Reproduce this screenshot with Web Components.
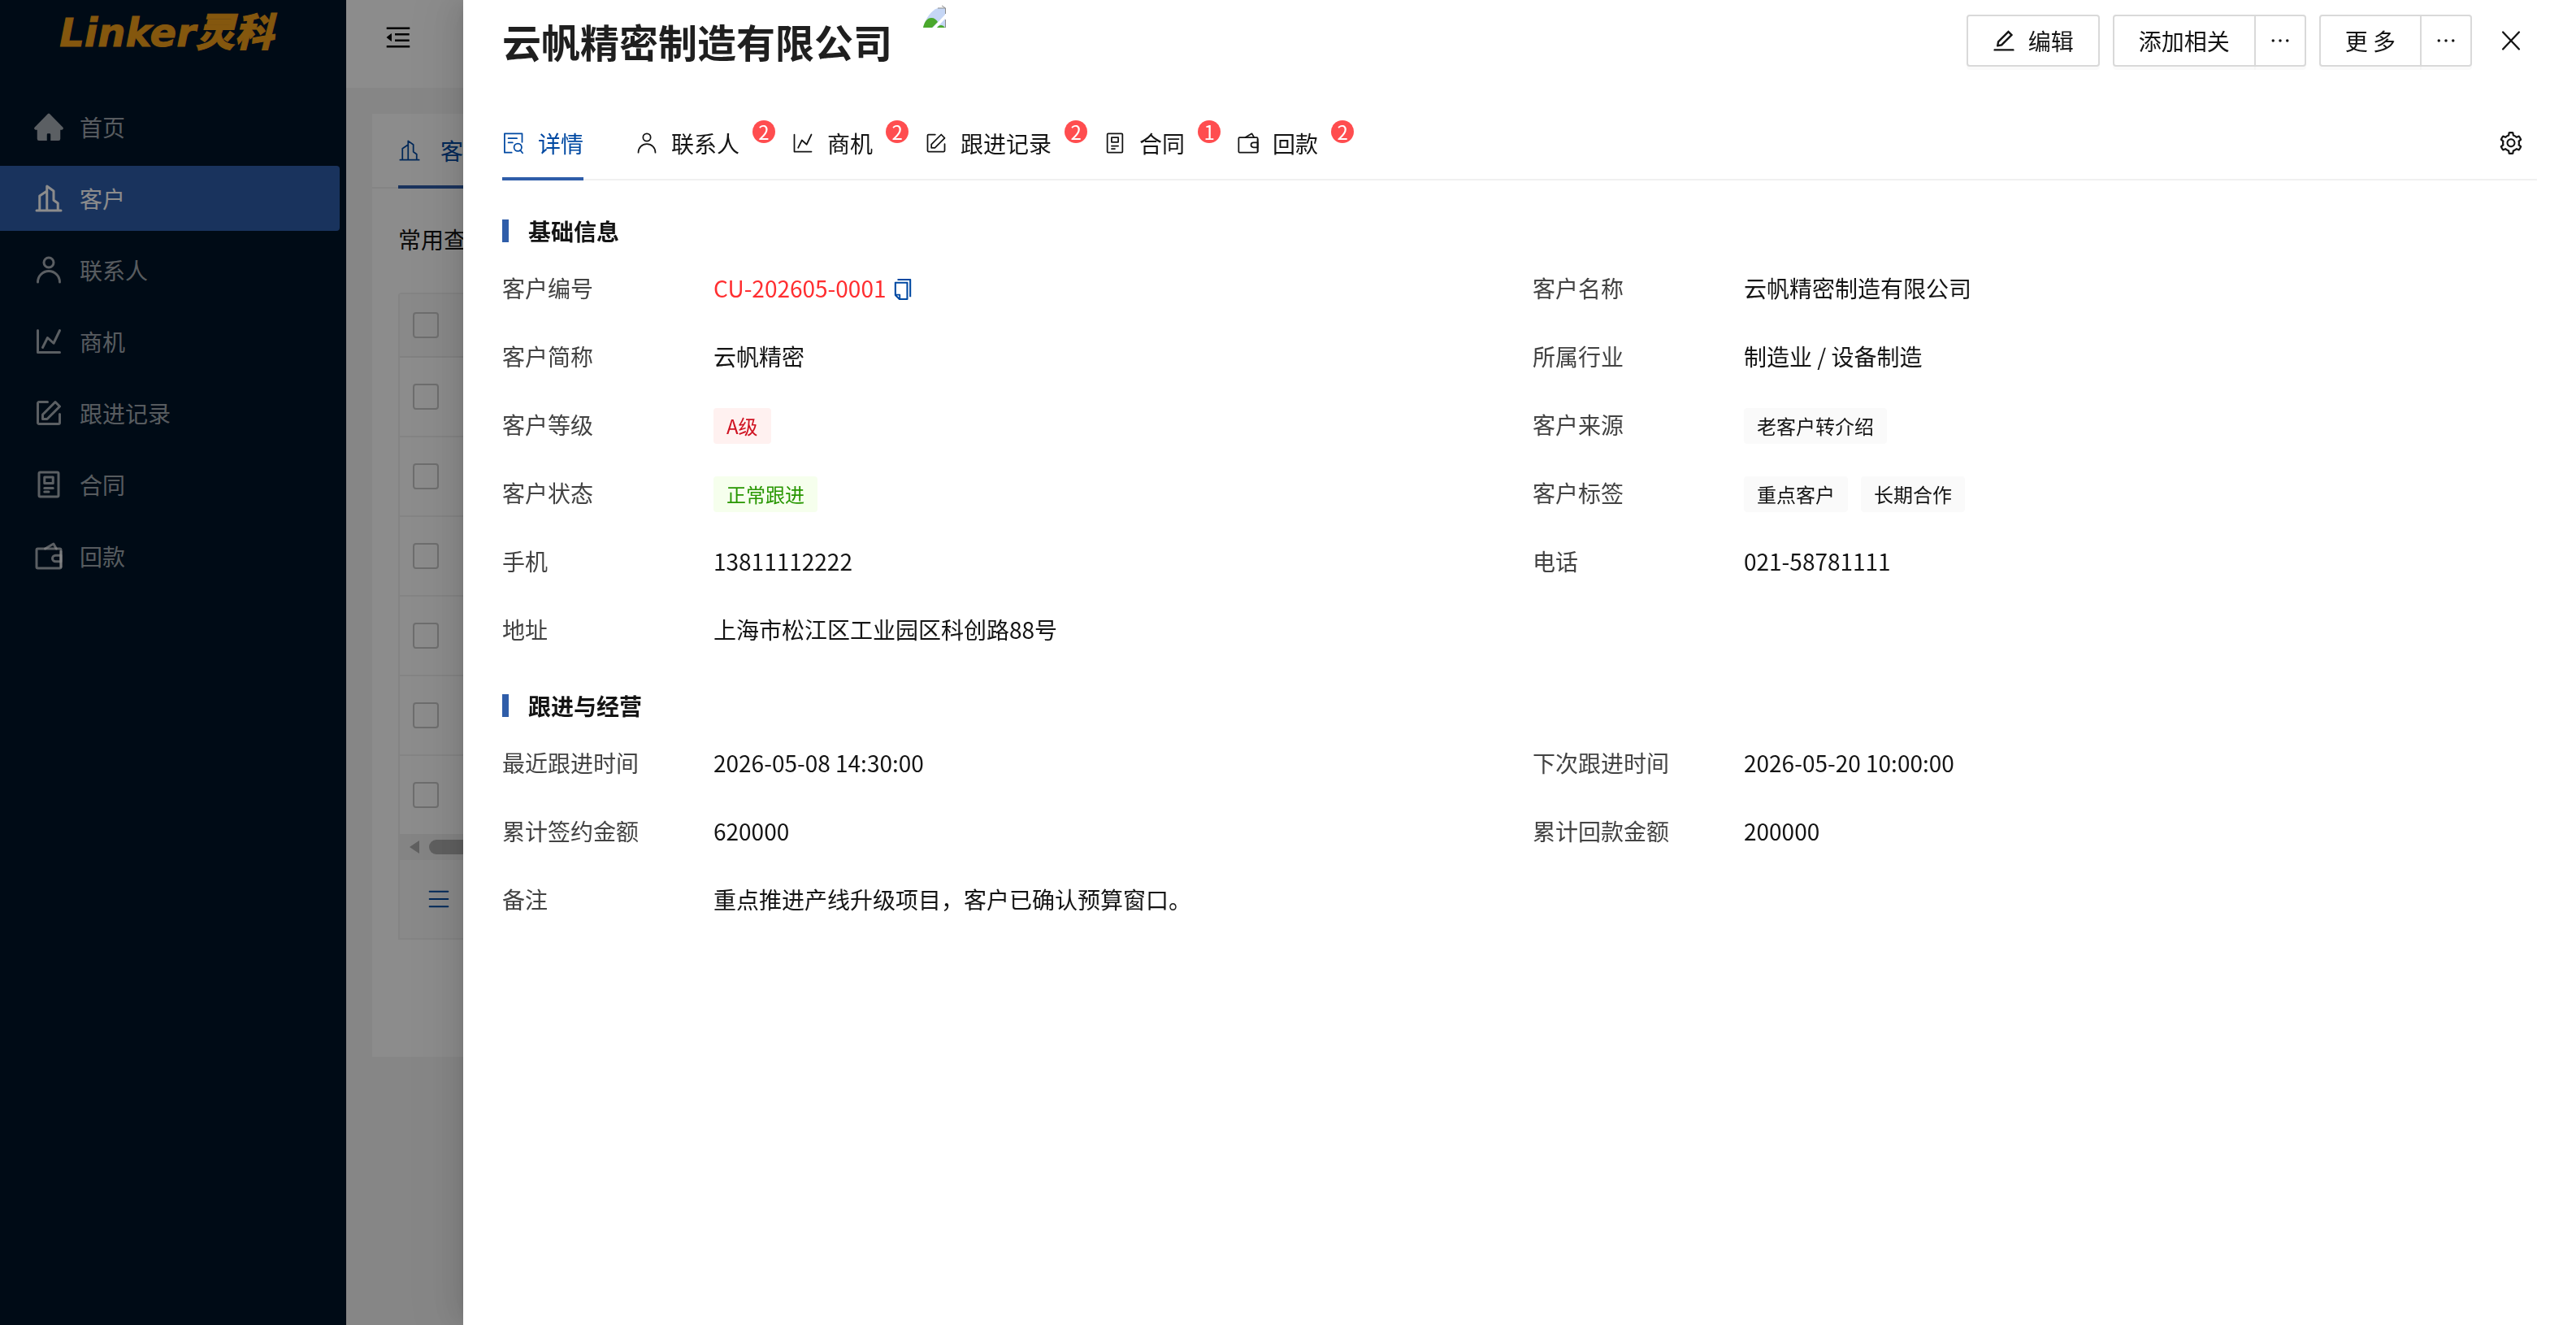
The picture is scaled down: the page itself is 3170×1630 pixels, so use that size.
<!DOCTYPE html>
<html lang="zh-CN">
<head>
<meta charset="UTF-8">
<meta name="viewport" content="width=device-width, initial-scale=1">
<title>云帆精密制造有限公司</title>
<style>
  :root {
    --primary: #2f5da9;
    --primary-text: #0049a2;
    --text: #141414;
    --label: #434343;
    --line: #f0f0f0;
    --danger: #ff4d4f;
  }

  body {
    margin: 0;
    min-height: 100vh;
    overflow: hidden;
    color: var(--text);
    font: 28px/40px "Noto Sans CJK SC", "Noto Sans", sans-serif;
  }
</style>
</head>
<body>
<crm-app></crm-app>

<script>
const STROKED = '0 0 48 48';
const FILLED = '64 64 896 896';

const ICONS = {
  home: [STROKED, '<path fill="currentColor" stroke="none" d="M22.6 2.6a2 2 0 0 1 2.8 0L47 24.5c1.8 1.8.6 4.5-1.6 4.5H43v14.5a3 3 0 0 1-3 3H27V36.5a1.5 1.5 0 0 0-1.5-1.5h-3a1.5 1.5 0 0 0-1.5 1.5v10H8a3 3 0 0 1-3-3V29H2.6C.4 29-.8 26.3 1 24.5Z"/>'],
  building: [STROKED, '<path d="M4 44H44M9 44V20L21 12M21 44V4L32 12V27L39 32V44"/>'],
  user: [STROKED, '<circle cx="24" cy="12" r="8"/><path d="M42 44C42 34.06 33.94 26 24 26S6 34.06 6 44"/>'],
  chart: [STROKED, '<path d="M6 6V42H42"/><path d="M14 34L22 18L32 27L42 6"/>'],
  write: [STROKED, '<path d="M42 26V40C42 41.1 41.1 42 40 42H8C6.9 42 6 41.1 6 40V8C6 6.9 6.9 6 8 6H22"/><path d="M14 26.72V34H21.32L42 13.31L34.7 6Z"/>'],
  contract: [STROKED, '<rect x="8" y="4" width="32" height="40" rx="2"/><path d="M17 12H31V22H17ZM17 30H31M17 36H24"/>'],
  wallet: [STROKED, '<path d="M18 12L31.8 4L36.4 12"/><rect x="4" y="12" width="40" height="32" rx="2"/><path d="M35.25 33H44V23H35.25C32.35 23 30 25.24 30 28S32.35 33 35.25 33Z"/><path d="M44 16.5V41.5"/>'],
  detail: [STROKED, '<path d="M20 44H5V4H42V22"/><path d="M13 14H31M13 23H22"/><circle cx="33" cy="33" r="8"/><path d="M38 39L43 45"/>'],
  list: [STROKED, '<path d="M7 10H41M7 24H41M7 38H41"/>'],
  close: [STROKED, '<path d="M7 6L41 42M41 6L7 42"/>'],
  fold: [FILLED, '<path d="M408 442h480c4.4 0 8-3.6 8-8v-56c0-4.4-3.6-8-8-8H408c-4.4 0-8 3.6-8 8v56c0 4.4 3.6 8 8 8zm-8 204c0 4.4 3.6 8 8 8h480c4.4 0 8-3.6 8-8v-56c0-4.4-3.6-8-8-8H408c-4.4 0-8 3.6-8 8v56zm504-486H120c-4.4 0-8 3.6-8 8v56c0 4.4 3.6 8 8 8h784c4.4 0 8-3.6 8-8v-56c0-4.4-3.6-8-8-8zm0 632H120c-4.4 0-8 3.6-8 8v56c0 4.4 3.6 8 8 8h784c4.4 0 8-3.6 8-8v-56c0-4.4-3.6-8-8-8zM115.4 518.9L271.7 642c5.8 4.6 14.4.5 14.4-6.9V388.9c0-7.4-8.5-11.5-14.4-6.9L115.4 505.1a8.74 8.74 0 000 13.8z"/>'],
  edit: [FILLED, '<path d="M257.7 752c2 0 4-.2 6-.5L431.9 722c2-.4 3.9-1.3 5.3-2.8l423.9-423.9a9.96 9.96 0 000-14.1L694.9 114.9c-1.9-1.9-4.4-2.9-7.1-2.9s-5.2 1-7.1 2.9L256.8 538.8c-1.5 1.5-2.4 3.3-2.8 5.3l-29.5 168.2a33.5 33.5 0 009.4 29.8c6.6 6.4 14.9 9.9 23.8 9.9zm67.4-174.4L687.8 215l73.3 73.3-362.7 362.6-88.9 15.7 15.6-89zM880 836H144c-17.7 0-32 14.3-32 32v36c0 4.4 3.6 8 8 8h784c4.4 0 8-3.6 8-8v-36c0-17.7-14.3-32-32-32z"/>'],
  more: [FILLED, '<path d="M176 511a56 56 0 10112 0 56 56 0 10-112 0zm280 0a56 56 0 10112 0 56 56 0 10-112 0zm280 0a56 56 0 10112 0 56 56 0 10-112 0z"/>'],
  copy: [FILLED, '<path d="M832 64H296c-4.4 0-8 3.6-8 8v56c0 4.4 3.6 8 8 8h496v688c0 4.4 3.6 8 8 8h56c4.4 0 8-3.6 8-8V96c0-17.7-14.3-32-32-32zM704 192H192c-17.7 0-32 14.3-32 32v530.7c0 8.5 3.4 16.6 9.4 22.6l173.3 173.3c2.2 2.2 4.7 4 7.4 5.5v1.9h4.2c3.5 1.3 7.2 2 11 2H704c17.7 0 32-14.3 32-32V224c0-17.7-14.3-32-32-32zM350 856.2L263.9 770H350v86.2zM664 888H414V746c0-22.1-17.9-40-40-40H232V264h432v624z"/>'],
  setting: [FILLED, '<path d="M924.8 625.7l-65.5-56c3.1-19 4.7-38.4 4.7-57.8s-1.6-38.8-4.7-57.8l65.5-56a32.03 32.03 0 009.3-35.2l-.9-2.6a443.74 443.74 0 00-79.7-137.9l-1.8-2.1a32.12 32.12 0 00-35.1-9.5l-81.3 28.9c-30-24.6-63.5-44-99.7-57.6l-15.7-85a32.05 32.05 0 00-25.8-25.7l-2.7-.5c-52.1-9.4-106.9-9.4-159 0l-2.7.5a32.05 32.05 0 00-25.8 25.7l-15.8 85.4a351.86 351.86 0 00-99 57.4l-81.9-29.1a32 32 0 00-35.1 9.5l-1.8 2.1a446.02 446.02 0 00-79.7 137.9l-.9 2.6c-4.5 12.5-.8 26.5 9.3 35.2l66.3 56.6c-3.1 18.8-4.6 38-4.6 57.1 0 19.2 1.5 38.4 4.6 57.1L99 625.5a32.03 32.03 0 00-9.3 35.2l.9 2.6c18.1 50.4 44.9 96.9 79.7 137.9l1.8 2.1a32.12 32.12 0 0035.1 9.5l81.9-29.1c29.8 24.5 63.1 43.9 99 57.4l15.8 85.4a32.05 32.05 0 0025.8 25.7l2.7.5a449.4 449.4 0 00159 0l2.7-.5a32.05 32.05 0 0025.8-25.7l15.7-85a350 350 0 0099.7-57.6l81.3 28.9a32 32 0 0035.1-9.5l1.8-2.1c34.8-41.1 61.6-87.5 79.7-137.9l.9-2.6c4.5-12.3.8-26.3-9.3-35zM788.3 465.9c2.5 15.1 3.8 30.6 3.8 46.1s-1.3 31-3.8 46.1l-6.6 40.1 74.7 63.9a370.03 370.03 0 01-42.6 73.6L721 702.8l-31.4 25.8c-23.9 19.6-50.5 35-79.3 45.8l-38.1 14.3-17.9 97a377.5 377.5 0 01-85 0l-17.9-97.2-37.8-14.5c-28.5-10.8-55-26.2-78.7-45.7l-31.4-25.9-93.4 33.2c-17-22.9-31.2-47.6-42.6-73.6l75.5-64.5-6.5-40c-2.4-14.9-3.7-30.3-3.7-45.5 0-15.3 1.2-30.6 3.7-45.5l6.5-40-75.5-64.5c11.3-26.1 25.6-50.7 42.6-73.6l93.4 33.2 31.4-25.9c23.7-19.5 50.2-34.9 78.7-45.7l37.9-14.3 17.9-97.2c28.1-3.2 56.8-3.2 85 0l17.9 97 38.1 14.3c28.7 10.8 55.4 26.2 79.3 45.8l31.4 25.8 92.8-32.9c17 22.9 31.2 47.6 42.6 73.6L781.8 426l6.5 39.9zM512 326c-97.2 0-176 78.8-176 176s78.8 176 176 176 176-78.8 176-176-78.8-176-176-176zm79.2 255.2A111.6 111.6 0 01512 614c-29.9 0-58-11.7-79.2-32.8A111.6 111.6 0 01400 502c0-29.9 11.7-58 32.8-79.2C454 401.6 482.1 390 512 390c29.9 0 58 11.6 79.2 32.8A111.6 111.6 0 01624 502c0 29.9-11.7 58-32.8 79.2z"/>']
};

class UiIcon extends HTMLElement {
  constructor() {
    super();
    this.attachShadow({ mode: 'open' });
  }

  connectedCallback() {
    const [box, body] = ICONS[this.getAttribute('name')];
    const paint = box === STROKED
      ? 'fill="none" stroke="currentColor" stroke-linecap="round" stroke-linejoin="round"'
      : 'fill="currentColor"';

    this.shadowRoot.innerHTML = `
      <style>
        :host {
          display: block;
          flex: none;
          width: var(--icon-size, 28px);
          height: var(--icon-size, 28px);
        }

        svg {
          display: block;
          width: 100%;
          height: 100%;
          stroke-width: var(--icon-stroke, 4);
        }
      </style>
      <svg viewBox="${box}" ${paint} aria-hidden="true">${body}</svg>
    `;
  }
}

class UiButton extends HTMLElement {
  constructor() {
    super();
    this.attachShadow({ mode: 'open' });
  }

  connectedCallback() {
    const icon = this.getAttribute('icon');
    const label = this.getAttribute('label');

    this.shadowRoot.innerHTML = `
      <style>
        :host {
          display: block;
        }

        button {
          display: flex;
          align-items: center;
          justify-content: center;
          gap: 16px;
          box-sizing: border-box;
          min-width: 64px;
          height: 64px;
          padding: 0 30px;
          border: 2px solid #d9d9d9;
          border-radius: var(--button-radius, 4px);
          background: #fff;
          box-shadow: 0 4px 0 rgba(0, 0, 0, 0.02);
          color: inherit;
          font: inherit;
          white-space: nowrap;
          cursor: pointer;
        }

        :host([square]) button,
        :host([plain]) button {
          width: 64px;
          padding: 0;
        }

        :host([plain]) button {
          border-color: transparent;
          background: none;
          box-shadow: none;
        }
      </style>
      <button type="button" ${label ? `aria-label="${label}"` : ''}>
        ${icon ? `<ui-icon name="${icon}"></ui-icon>` : ''}<slot></slot>
      </button>
    `;
  }
}

class SplitButton extends HTMLElement {
  constructor() {
    super();
    this.attachShadow({ mode: 'open' });
    this.shadowRoot.innerHTML = `
      <style>
        :host {
          display: flex;
        }

        .main {
          --button-radius: 4px 0 0 4px;
        }

        .more {
          --button-radius: 0 4px 4px 0;
          margin-left: -2px;
        }
      </style>
      <ui-button class="main"><slot></slot></ui-button>
      <ui-button class="more" icon="more" label="展开" square></ui-button>
    `;
  }
}

class SideMenu extends HTMLElement {
  constructor() {
    super();
    this.attachShadow({ mode: 'open' });

    const items = [
      ['home', '首页'],
      ['building', '客户'],
      ['user', '联系人'],
      ['chart', '商机'],
      ['write', '跟进记录'],
      ['contract', '合同'],
      ['wallet', '回款']
    ];

    this.shadowRoot.innerHTML = `
      <style>
        :host {
          display: block;
          background: #001529;
        }

        .logo {
          display: flex;
          align-items: center;
          justify-content: center;
          height: 80px;
          margin-right: 16px;
          color: #f09e1b;
          font: italic 900 48px/80px "DejaVu Sans", "Noto Sans CJK SC", sans-serif;
          -webkit-text-stroke: 1px #f09e1b;
        }

        nav {
          display: flex;
          flex-direction: column;
          gap: 8px;
          padding: 36px 8px 0 0;
        }

        a {
          --icon-size: 36px;
          display: flex;
          align-items: center;
          gap: 20px;
          height: 80px;
          padding-left: 42px;
          border-radius: 0 4px 4px 0;
          color: rgba(255, 255, 255, 0.65);
          text-decoration: none;
        }

        a.active {
          background: var(--primary);
          color: #fff;
        }
      </style>
      <div class="logo">Linker灵科</div>
      <nav>
        ${items.map(([icon, text]) => `
          <a href="#" class="${text === '客户' ? 'active' : ''}"><ui-icon name="${icon}"></ui-icon><span>${text}</span></a>
        `).join('')}
      </nav>
    `;
  }
}

class CustomerList extends HTMLElement {
  constructor() {
    super();
    this.attachShadow({ mode: 'open' });

    const rows = [1, 2, 3, 4, 5, 6];

    this.shadowRoot.innerHTML = `
      <style>
        :host {
          display: block;
          box-sizing: border-box;
          min-height: 1160px;
          background: #fff;
        }

        .tabs {
          display: flex;
          height: 90px;
          padding: 0 32px;
          border-bottom: 2px solid var(--line);
        }

        .tab {
          display: flex;
          align-items: center;
          gap: 24px;
          margin-bottom: -2px;
          padding: 2px 64px 0 0;
          border-bottom: 4px solid var(--primary);
          color: var(--primary-text);
          text-decoration: none;
          --icon-stroke: 3;
        }

        .body {
          padding: 42px 32px 0;
        }

        .query {
          margin-bottom: 46px;
        }

        .grid {
          border: 2px solid var(--line);
          border-radius: 4px 4px 0 0;
        }

        table {
          width: 100%;
          border-collapse: separate;
          border-spacing: 0;
        }

        th,
        td {
          box-sizing: border-box;
          height: 98px;
          padding: 0 16px;
          border-bottom: 2px solid var(--line);
          text-align: left;
        }

        th {
          height: 78px;
          background: #fafafa;
        }

        tr:last-child td {
          height: 96px;
          border-bottom: 0;
        }

        input {
          display: block;
          box-sizing: border-box;
          width: 32px;
          height: 32px;
          margin: 0;
          border: 2px solid #c8c8c8;
          border-radius: 4px;
          appearance: none;
        }

        .scrollbar {
          display: flex;
          align-items: center;
          gap: 12px;
          height: 32px;
          padding-left: 12px;
          background: var(--line);
        }

        .arrow {
          width: 12px;
          height: 16px;
          background: #aeaeae;
          clip-path: polygon(0 50%, 100% 0, 100% 100%);
        }

        .thumb {
          flex: 1;
          height: 18px;
          border-radius: 9px;
          background: #aeaeae;
        }

        .foot {
          display: flex;
          align-items: center;
          height: 96px;
          padding-left: 32px;
          background: #fafafa;
          color: var(--primary-text);
          --icon-size: 32px;
          --icon-stroke: 3;
        }

        tr:first-child th {
          border-bottom-color: #ebebeb;
        }
      </style>
      <div class="tabs">
        <a class="tab" href="#"><ui-icon name="building"></ui-icon><span>客户</span></a>
      </div>
      <div class="body">
        <div class="query">常用查询</div>
        <div class="grid">
          <table>
            <thead>
              <tr><th><input type="checkbox" aria-label="全选"></th></tr>
            </thead>
            <tbody>
              ${rows.map(n => `<tr><td><input type="checkbox" aria-label="选择第${n}行"></td></tr>`).join('')}
            </tbody>
          </table>
          <div class="scrollbar"><div class="arrow"></div><div class="thumb"></div></div>
          <div class="foot"><ui-icon name="list"></ui-icon></div>
        </div>
      </div>
    `;
  }
}

class RecordTab extends HTMLElement {
  constructor() {
    super();
    this.attachShadow({ mode: 'open' });
  }

  connectedCallback() {
    const count = this.getAttribute('count');

    this.shadowRoot.innerHTML = `
      <style>
        :host {
          display: flex;
        }

        button {
          position: relative;
          display: flex;
          align-items: center;
          gap: 16px;
          margin-bottom: -2px;
          padding: 2px 0 0;
          border: 0;
          border-bottom: 4px solid transparent;
          background: none;
          color: inherit;
          font: inherit;
          white-space: nowrap;
          cursor: pointer;
          --icon-stroke: 3;
        }

        :host([active]) button {
          border-color: var(--primary);
          color: var(--primary-text);
        }

        .badge {
          position: absolute;
          top: 16px;
          left: calc(100% + 16px);
          width: 28px;
          height: 28px;
          border-radius: 14px;
          background: var(--danger);
          color: #fff;
          font-size: 24px;
          line-height: 28px;
          text-align: center;
        }
      </style>
      <button type="button" role="tab">
        <ui-icon name="${this.getAttribute('icon')}"></ui-icon>
        <slot></slot>
        ${count ? `<span class="badge">${count}</span>` : ''}
      </button>
    `;
  }
}

class UiTag extends HTMLElement {
  constructor() {
    super();
    this.attachShadow({ mode: 'open' });
    this.shadowRoot.innerHTML = `
      <style>
        :host {
          display: block;
          height: 44px;
          padding: 0 16px;
          border-radius: 4px;
          background: #fafafa;
          font-size: 24px;
          line-height: 44px;
        }

        :host([color="red"]) {
          background: #fff1f0;
          color: #cf1322;
        }

        :host([color="green"]) {
          background: #f6ffed;
          color: #279600;
        }
      </style>
      <slot></slot>
    `;
  }
}

class RecordSection extends HTMLElement {
  constructor() {
    super();
    this.attachShadow({ mode: 'open' });
  }

  connectedCallback() {
    this.shadowRoot.innerHTML = `
      <style>
        :host {
          display: block;
        }

        h2 {
          display: flex;
          align-items: center;
          gap: 24px;
          margin: 0 0 28px;
          font-size: 28px;
          font-weight: 700;
          line-height: 44px;
        }

        h2::before {
          content: "";
          width: 8px;
          height: 28px;
          background: var(--primary);
        }

        .fields {
          display: grid;
          grid-template-columns: 1fr 1fr;
          gap: 40px 32px;
        }
      </style>
      <h2>${this.getAttribute('heading')}</h2>
      <div class="fields"><slot></slot></div>
    `;
  }
}

class RecordField extends HTMLElement {
  constructor() {
    super();
    this.attachShadow({ mode: 'open' });
  }

  connectedCallback() {
    this.shadowRoot.innerHTML = `
      <style>
        :host {
          display: flex;
          min-height: 44px;
        }

        :host([wide]) {
          grid-column: 1 / -1;
        }

        .label {
          flex: none;
          width: 260px;
          color: var(--label);
        }

        .value {
          display: flex;
          align-items: flex-start;
          gap: 16px;
        }
      </style>
      <div class="label">${this.getAttribute('label')}</div>
      <div class="value"><slot></slot></div>
    `;
  }
}

class RecordCode extends HTMLElement {
  constructor() {
    super();
    this.attachShadow({ mode: 'open' });
    this.shadowRoot.innerHTML = `
      <style>
        :host {
          display: flex;
          align-items: center;
          gap: 8px;
          color: #ff2e30;
        }

        button {
          padding: 4px 0 0;
          border: 0;
          background: none;
          color: var(--primary-text);
          cursor: pointer;
          --icon-size: 26px;
        }
      </style>
      <slot></slot>
      <button type="button" aria-label="复制"><ui-icon name="copy"></ui-icon></button>
    `;
  }
}

class RecordDrawer extends HTMLElement {
  constructor() {
    super();
    this.attachShadow({ mode: 'open' });
    this.shadowRoot.innerHTML = `
      <style>
        :host {
          display: block;
          box-sizing: border-box;
          padding: 0 48px;
          background: #fff;
          box-shadow:
            -12px 0 32px 0 rgba(0, 0, 0, 0.08),
            -6px 0 12px -8px rgba(0, 0, 0, 0.12),
            -18px 0 56px 16px rgba(0, 0, 0, 0.05);
        }

        header {
          display: flex;
          align-items: center;
          height: 100px;
        }

        h1 {
          margin: 0;
          color: #1f1f1f;
          font-size: 48px;
          font-weight: 700;
          line-height: 72px;
        }

        .avatar {
          align-self: flex-start;
          width: 32px;
          height: 32px;
          margin: 4px 0 0 36px;
        }

        .actions {
          display: flex;
          gap: 16px;
          margin-left: auto;
        }

        .tabs {
          display: flex;
          height: 88px;
          margin-top: 32px;
          border-bottom: 2px solid var(--line);
        }

        .list {
          display: flex;
          gap: 64px;
        }

        .tabs ui-button {
          align-self: center;
          margin-left: auto;
        }

        .content {
          display: grid;
          gap: 48px;
          padding-top: 40px;
        }
      </style>
      <header>
        <h1>云帆精密制造有限公司</h1>
        <svg class="avatar" viewBox="0 0 32 32" aria-hidden="true">
          <path fill="#c5d6f5" d="M2 29C6 17 12 9 20 6H29V14L14 30H2Z"/>
          <path fill="#c5d6f5" d="M19 30L29 19V30Z"/>
          <path fill="#4aa82c" d="M2 30C4 21 8 18 12 18C16 18 18 20 20 23L13 30Z"/>
          <path fill="#4aa82c" d="M19 30C22 26 26 26 29 30Z"/>
          <path fill="none" stroke="#8a8a8a" stroke-width="1" d="M20 6H29.5V13M25 3L29.500 6M29.500 20V30"/>
        </svg>
        <div class="actions">
          <ui-button icon="edit">编辑</ui-button>
          <split-button>添加相关</split-button>
          <split-button>更 多</split-button>
          <ui-button icon="close" label="关闭" plain></ui-button>
        </div>
      </header>
      <div class="tabs">
        <div class="list" role="tablist">
          <record-tab icon="detail" active>详情</record-tab>
          <record-tab icon="user" count="2">联系人</record-tab>
          <record-tab icon="chart" count="2">商机</record-tab>
          <record-tab icon="write" count="2">跟进记录</record-tab>
          <record-tab icon="contract" count="1">合同</record-tab>
          <record-tab icon="wallet" count="2">回款</record-tab>
        </div>
        <ui-button icon="setting" label="设置" plain></ui-button>
      </div>
      <div class="content">
        <record-section heading="基础信息">
          <record-field label="客户编号"><record-code>CU-202605-0001</record-code></record-field>
          <record-field label="客户名称">云帆精密制造有限公司</record-field>
          <record-field label="客户简称">云帆精密</record-field>
          <record-field label="所属行业">制造业 / 设备制造</record-field>
          <record-field label="客户等级"><ui-tag color="red">A级</ui-tag></record-field>
          <record-field label="客户来源"><ui-tag>老客户转介绍</ui-tag></record-field>
          <record-field label="客户状态"><ui-tag color="green">正常跟进</ui-tag></record-field>
          <record-field label="客户标签"><ui-tag>重点客户</ui-tag><ui-tag>长期合作</ui-tag></record-field>
          <record-field label="手机">13811112222</record-field>
          <record-field label="电话">021-58781111</record-field>
          <record-field label="地址" wide>上海市松江区工业园区科创路88号</record-field>
        </record-section>
        <record-section heading="跟进与经营">
          <record-field label="最近跟进时间">2026-05-08 14:30:00</record-field>
          <record-field label="下次跟进时间">2026-05-20 10:00:00</record-field>
          <record-field label="累计签约金额">620000</record-field>
          <record-field label="累计回款金额">200000</record-field>
          <record-field label="备注" wide>重点推进产线升级项目，客户已确认预算窗口。</record-field>
        </record-section>
      </div>
    `;
  }
}

class CrmApp extends HTMLElement {
  constructor() {
    super();
    this.attachShadow({ mode: 'open' });
    this.shadowRoot.innerHTML = `
      <style>
        :host {
          display: grid;
          grid-template-columns: 426px 1fr;
          min-height: 100vh;
        }

        main {
          background: #f5f5f5;
        }

        .topbar {
          display: flex;
          align-items: center;
          height: 92px;
          padding: 0 48px 16px;
          background: #fff;
        }

        .topbar button {
          padding: 0;
          border: 0;
          background: none;
          color: #000;
          cursor: pointer;
          --icon-size: 32px;
        }

        customer-list {
          margin: 32px;
        }

        .mask {
          position: fixed;
          inset: 0;
          display: flex;
          justify-content: flex-end;
          background: rgba(0, 0, 0, 0.45);
        }

        record-drawer {
          width: round(up, 82%, 1px);
        }
      </style>
      <side-menu></side-menu>
      <main>
        <div class="topbar">
          <button type="button" aria-label="收起菜单"><ui-icon name="fold"></ui-icon></button>
        </div>
        <customer-list></customer-list>
      </main>
      <div class="mask"><record-drawer></record-drawer></div>
    `;
  }
}

customElements.define('ui-icon', UiIcon);
customElements.define('ui-button', UiButton);
customElements.define('split-button', SplitButton);
customElements.define('side-menu', SideMenu);
customElements.define('customer-list', CustomerList);
customElements.define('record-tab', RecordTab);
customElements.define('ui-tag', UiTag);
customElements.define('record-section', RecordSection);
customElements.define('record-field', RecordField);
customElements.define('record-code', RecordCode);
customElements.define('record-drawer', RecordDrawer);
customElements.define('crm-app', CrmApp);
</script>
</body>
</html>
